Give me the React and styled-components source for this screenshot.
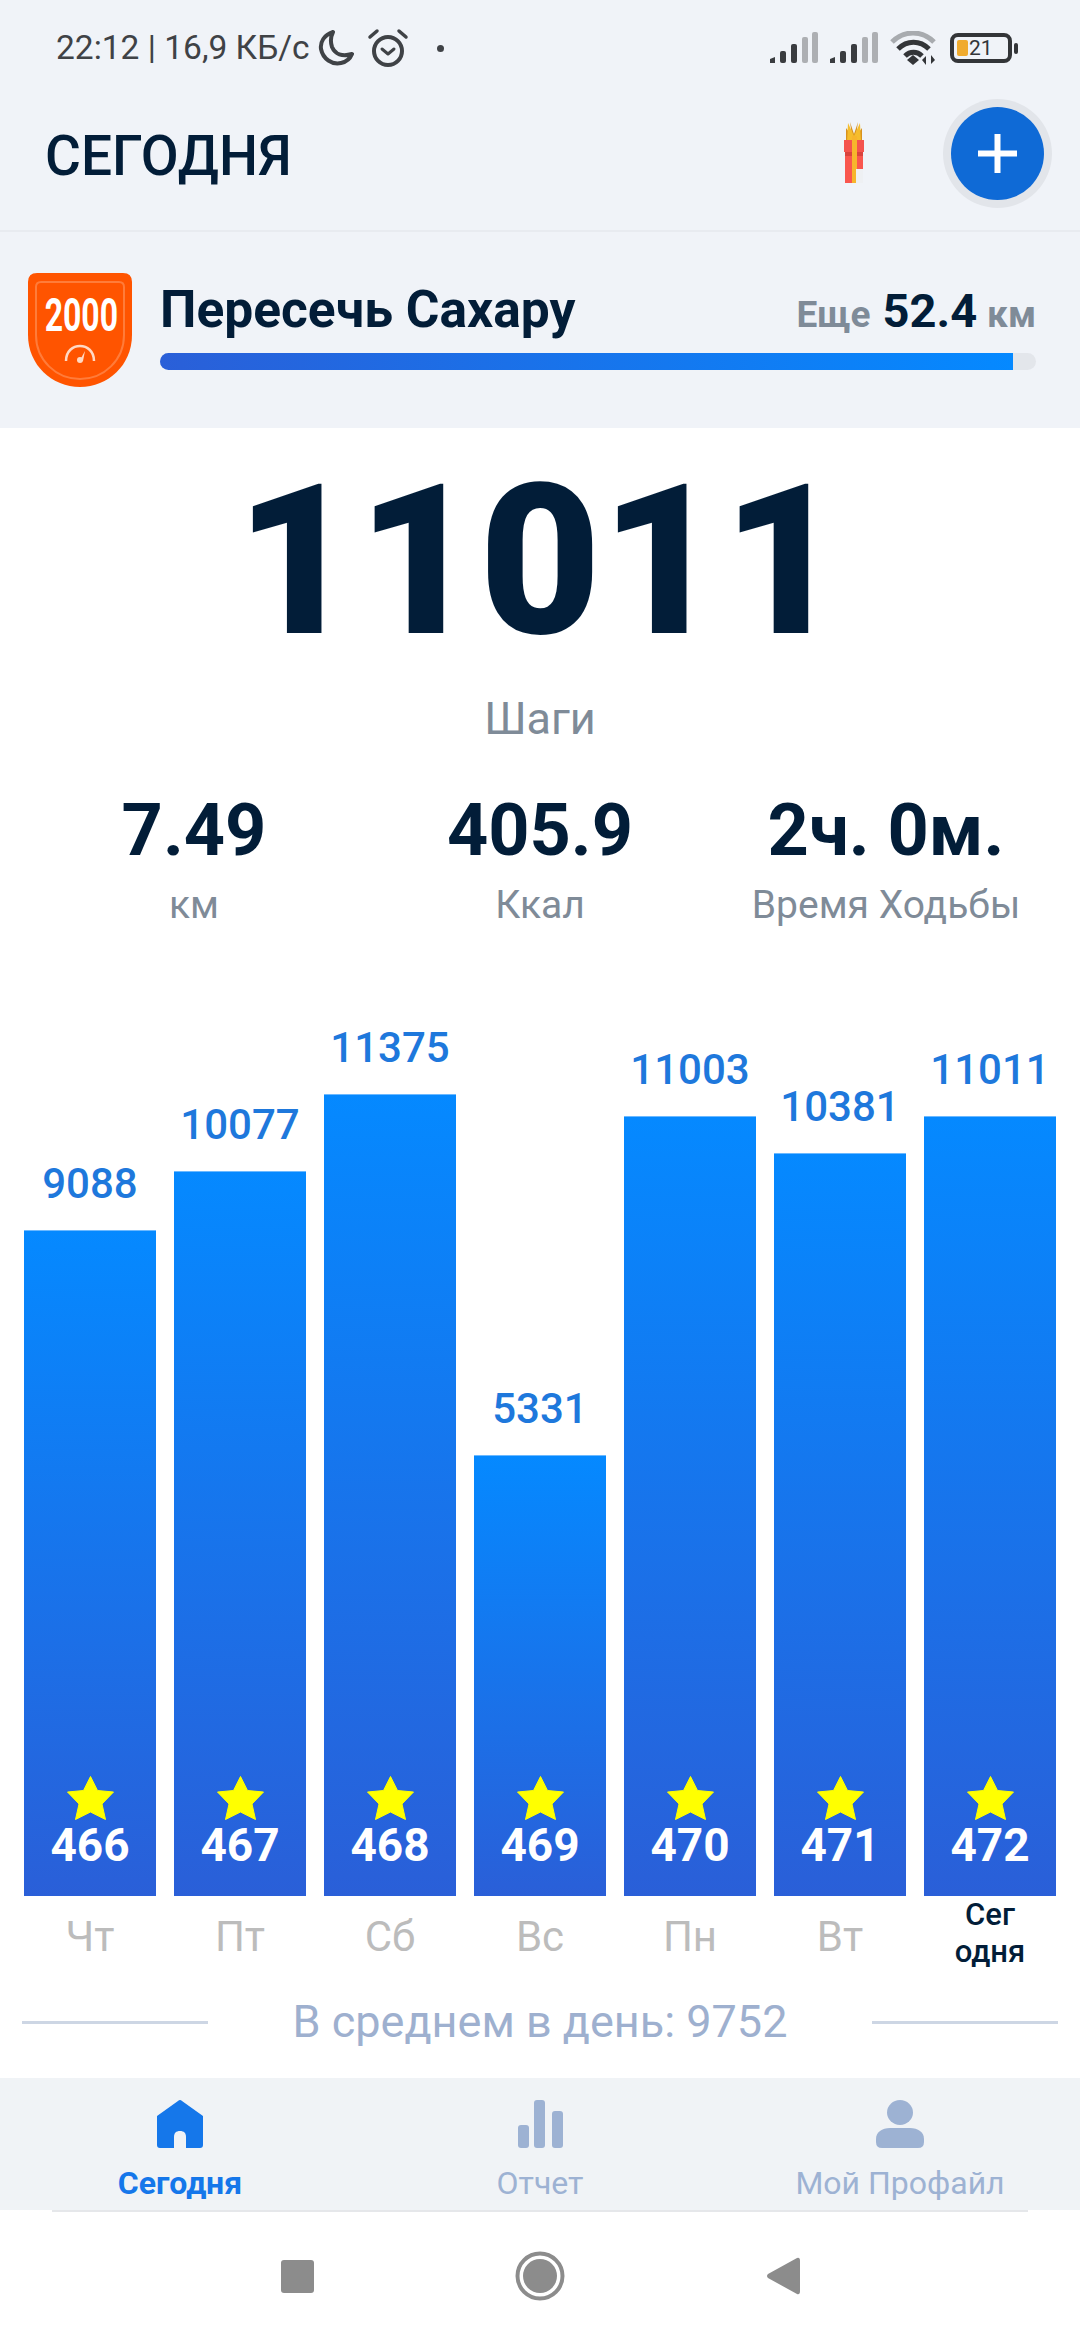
import React from "react";
import styled, { createGlobalStyle } from "styled-components";

const Global = createGlobalStyle`
  html, body { margin: 0; padding: 0; background: #fff; }
  * { box-sizing: border-box; }
  #root { width: 1080px; height: 2340px; overflow: hidden; }
`;

const Screen = styled.div`
  width: 1080px; height: 2340px; display: flex; flex-direction: column;
  font-family: Roboto, "Noto Sans", sans-serif; background: #fff; color: #021d38;
`;
const TopArea = styled.div`background: #f0f3f8;`;
const StatusBar = styled.div`
  height: 90px; display: flex; align-items: center; justify-content: space-between;
  padding: 6px 62px 0 56px; color: #3f4246;
`;
const StatusGroup = styled.div`display: flex; align-items: center; gap: ${p => p.$gap ?? 0}px;`;
const StatusText = styled.span`font-size: 33.5px; line-height: 40px; margin-right: 8px; white-space: nowrap;`;
const Dot = styled.span`width: 7px; height: 7px; border-radius: 50%; background: #3f4246; margin-left: 28px;`;

const Header = styled.header`
  height: 142px; display: flex; align-items: center; padding: 0 36px 14px 45px;
  border-bottom: 2px solid #e8ebf0;
`;
const Title = styled.h1`margin: 6px 0 0; flex: 1; font-size: 55px; line-height: 64px; font-weight: 500; color: #021d38;`;
const AddButton = styled.div`
  width: 93px; height: 93px; border-radius: 50%; background: #0f6ad6; margin-left: 87px;
  box-shadow: 0 0 0 8px #e2e5ea; display: flex; align-items: center; justify-content: center;
`;

const Challenge = styled.section`
  height: 196px; display: flex; gap: 28px; padding: 41px 44px 0 28px;
`;
const BadgeBox = styled.div`position: relative; flex: none; width: 104px; height: 114px;`;
const BadgeValue = styled.span`
  position: absolute; left: 0; right: 0; top: 14px; text-align: center;
  font-size: 47px; line-height: 56px; font-weight: 700; color: #fff; transform: scaleX(0.68);
`;
const ChallengeBody = styled.div`flex: 1; display: flex; flex-direction: column; padding-top: 9px;`;
const ChallengeRow = styled.div`display: flex; align-items: baseline; justify-content: space-between; height: 56px;`;
const ChallengeTitle = styled.div`font-size: 51.5px; line-height: 56px; font-weight: 700; color: #021d38;`;
const Remain = styled.div`font-size: 37px; line-height: 56px; font-weight: 700; color: #7f8b98; white-space: nowrap;`;
const RemainValue = styled.span`font-size: 47px; color: #021d38; margin: 0 10px 0 12px;`;
const Track = styled.div`height: 17px; margin-top: 15px; border-radius: 9px; background: #e3e6eb; overflow: hidden;`;
const Fill = styled.div`height: 100%; background: linear-gradient(90deg, #2a5fd8, #0589ff);`;

const Main = styled.main`flex: 1; display: flex; flex-direction: column; align-items: stretch;`;
const BigNumber = styled.div`
  margin-top: 33px; margin-bottom: -1px; text-align: center; font-size: 210px; line-height: 200px; font-weight: 900; color: #021d38;
`;
const StepsLabel = styled.div`margin-top: 34px; text-align: center; font-size: 45px; line-height: 50px; color: #7f8b98;`;
const Stats = styled.div`display: grid; grid-template-columns: repeat(3, 1fr); padding: 0 21px; margin-top: 47px;`;
const Stat = styled.div`display: flex; flex-direction: column; align-items: center;`;
const StatValue = styled.div`font-size: 72px; line-height: 80px; font-weight: 700; white-space: nowrap;`;
const StatLabel = styled.div`margin-top: 12px; font-size: 39px; line-height: 44px; color: #7f8b98; white-space: nowrap;`;

const Chart = styled.div`
  height: 969px; display: flex; align-items: flex-end; justify-content: space-between; padding: 0 24px;
`;
const Column = styled.div`width: 132px; display: flex; flex-direction: column; align-items: center;`;
const BarValue = styled.div`font-size: 42px; line-height: 40px; font-weight: 500; margin-bottom: 26px; color: #1e78dc;`;
const Bar = styled.div`
  width: 100%; display: flex; flex-direction: column; align-items: center; justify-content: flex-end;
  padding-bottom: 29px; background: linear-gradient(180deg, #0589ff 0%, #2a5fd8 100%);
  border-top: 1px solid #6cb9ff;
`;
const BarCount = styled.div`margin-top: 3px; font-size: 46px; line-height: 44px; font-weight: 700; color: #fff;`;

const Days = styled.div`height: 100px; display: flex; justify-content: space-between; padding: 0 24px;`;
const Day = styled.div`
  width: 132px; text-align: center; padding-top: ${p => (p.$today ? 0 : 21)}px; white-space: pre-line;
  font-size: ${p => (p.$today ? 31 : 42)}px; line-height: ${p => (p.$today ? 37 : 40)}px;
  font-weight: ${p => (p.$today ? 500 : 400)};
  color: ${p => (p.$today ? "#021d38" : "#bcbcbc")};
`;
const Average = styled.div`display: flex; align-items: center; justify-content: space-between; height: 52px; padding: 0 22px;`;
const AverageRule = styled.div`width: 186px; height: 3px; background: #cdd6e4;`;
const AverageText = styled.div`font-size: 45px; line-height: 52px; color: #9eb0cf; white-space: nowrap;`;

const TabBar = styled.nav`height: 132px; display: grid; grid-template-columns: repeat(3, 1fr); background: #f0f3f6;`;
const Tab = styled.div`
  display: flex; flex-direction: column; align-items: center; padding-top: 22px;
  color: ${p => (p.$active ? "#1577ea" : "#9db2d3")};
`;
const TabIcon = styled.div`height: 48px; display: flex;`;
const TabLabel = styled.div`
  margin-top: 17px; font-size: 32px; line-height: 36px; white-space: nowrap;
  font-weight: ${p => (p.$active ? 700 : 400)};
`;
const TabRule = styled.div`height: 2px; margin: 0 52px; background: #e5e7ea;`;
const NavBar = styled.div`height: 128px; flex: none; display: flex; align-items: center; justify-content: center;`;
const NavSlot = styled.div`width: 243px; display: flex; justify-content: center;`;

const Moon = () => (
  <svg width="36" height="38" viewBox="0 0 36 38" fill="none" stroke="#3f4246" strokeWidth="4" strokeLinejoin="round">
    <path d="M15 3 C6 6 2 13 3 20 C5 30 14 36 23 34 C28 33 32 30 34 25 C24 28 17 25 14 18 C12 12 13 7 15 3 Z" />
  </svg>
);
const Alarm = () => (
  <svg width="42" height="40" viewBox="0 0 42 40" fill="none" stroke="#3f4246" strokeLinecap="round" style={{ marginLeft: 13 }}>
    <circle cx="21" cy="23" r="14" strokeWidth="4" />
    <path d="M15 21 L21 26 L27 21" strokeWidth="3" strokeLinejoin="round" />
    <path d="M3 9 L10 3" strokeWidth="3.5" />
    <path d="M39 9 L32 3" strokeWidth="3.5" />
  </svg>
);
const Signal = () => (
  <svg width="48" height="32" viewBox="0 0 48 32">
    <path d="M0 27 L5 25 V31 H0 Z" fill="#3a3c40" />
    <rect x="10" y="19" width="6" height="12" rx="2" fill="#3a3c40" />
    <rect x="21" y="12" width="6" height="19" rx="2" fill="#3a3c40" />
    <rect x="32" y="5" width="6" height="26" rx="2" fill="#adafb3" />
    <rect x="42" y="0" width="6" height="31" rx="2" fill="#adafb3" />
  </svg>
);
const Wifi = () => (
  <svg width="48" height="34" viewBox="0 0 48 34" fill="none">
    <path d="M2 11 C14 -1 32 -1 44 11" stroke="#a8abaf" strokeWidth="5" />
    <path d="M8 18 C17 9 30 9 39 18" stroke="#333538" strokeWidth="5" />
    <path d="M15 25 C20 20 27 20 32 25" stroke="#333538" strokeWidth="5" />
    <path d="M23 24 L29 29 L23 34 L17 29 Z" fill="#333538" />
    <path d="M36 34 V25 L32 29 Z M41 24 V33 L45 29 Z" fill="#333538" />
  </svg>
);
const BatteryBox = styled.div`
  width: 62px; height: 30px; border: 4px solid #333538; border-radius: 8px;
  display: flex; align-items: center; padding-left: 3px;
`;
const BatteryFill = styled.span`width: 11px; height: 16px; border-radius: 2px; background: #f0ab2e;`;
const BatteryText = styled.span`font-size: 21px; line-height: 22px; margin-left: 1px; color: #333538;`;
const BatteryCap = styled.span`width: 4px; height: 11px; border-radius: 2px; background: #333538; margin-left: 2px;`;

const Gift = () => (
  <svg width="20" height="62" viewBox="0 0 20 62">
    <path d="M2 20 L2 6 L8 14 L6 0 L10 12 L14 0 L12 14 L18 6 L18 20 Z" fill="#d8921f" />
    <path d="M4 1 L10 14 L16 1 L17 20 H3 Z" fill="#f5bd2d" />
    <rect x="0" y="18" width="20" height="12" fill="#f4534e" />
    <rect x="1" y="30" width="18" height="31" fill="#f9564e" />
    <rect x="1" y="30" width="18" height="4" fill="#d9423d" />
    <rect x="8" y="14" width="5" height="47" fill="#f7b52c" />
    <rect x="12" y="47" width="7" height="14" fill="#eef0f3" />
  </svg>
);
const Plus = () => (
  <svg width="39" height="39" viewBox="0 0 39 39"><path d="M16.5 0 H22.5 V16.5 H39 V22.5 H22.5 V39 H16.5 V22.5 H0 V16.5 H16.5 Z" fill="#fff" /></svg>
);
const BadgeShape = () => (
  <svg width="104" height="114" viewBox="0 0 104 114">
    <path d="M9 0 H95 Q104 0 104 9 V62 C104 92 80 114 52 114 C24 114 0 92 0 62 V9 Q0 0 9 0 Z" fill="#ff5400" />
    <path d="M13 9 H91 Q96 9 96 14 V62 C96 87 76 106 52 106 C28 106 8 87 8 62 V14 Q8 9 13 9 Z" fill="none" stroke="#ff7c3a" strokeWidth="2" />
    <path d="M38 88 C38 68 66 68 66 88" fill="none" stroke="#ffd9c4" strokeWidth="2.5" />
    <path d="M52 87 L57 78 L55 88 Z" fill="#ffd9c4" />
    <circle cx="52" cy="87" r="3" fill="#ffd9c4" />
  </svg>
);
const Star = () => (
  <svg width="47" height="44" viewBox="0 0 47 44">
    <path d="M23.5 0.5 L30.5 14.5 L46.5 16 L35 28 L38.5 43.5 L23.5 36 L8.5 43.5 L12 28 L0.5 16 L16.5 14.5 Z" fill="#ffff00" stroke="#ffff00" strokeWidth="1" strokeLinejoin="round" />
  </svg>
);
const HomeIcon = () => (
  <svg width="46" height="48" viewBox="0 0 46 48" fill="currentColor">
    <path d="M21 1 Q23 -1 25 1 L46 16 V45 Q46 48 43 48 H29 V37 C29 33 27 31 23 31 C19 31 17 33 17 37 V48 H3 Q0 48 0 45 V16 Z" />
  </svg>
);
const ReportIcon = () => (
  <svg width="45" height="48" viewBox="0 0 45 48" fill="currentColor">
    <rect x="0" y="25" width="11" height="23" rx="3" />
    <rect x="16" y="0" width="11" height="48" rx="3" />
    <rect x="34" y="11" width="11" height="37" rx="3" />
  </svg>
);
const ProfileIcon = () => (
  <svg width="48" height="48" viewBox="0 0 48 48" fill="currentColor">
    <ellipse cx="24" cy="12.5" rx="13" ry="12.5" />
    <path d="M14 28 H34 C42 28 48 32 48 39 V42 Q48 48 42 48 H6 Q0 48 0 42 V39 C0 32 6 28 14 28 Z" />
  </svg>
);
const NavSquare = () => <svg width="33" height="33" viewBox="0 0 33 33"><rect width="33" height="33" rx="3" fill="#8c8c8c" /></svg>;
const NavCircle = () => (
  <svg width="50" height="50" viewBox="0 0 50 50">
    <circle cx="25" cy="25" r="22.5" fill="none" stroke="#8c8c8c" strokeWidth="4" />
    <circle cx="25" cy="25" r="17" fill="#8c8c8c" />
  </svg>
);
const NavBack = () => (
  <svg width="33" height="38" viewBox="0 0 33 38"><path d="M30 1 Q33 0 33 4 V34 Q33 38 30 37 L1 21 Q-1 19 1 17 Z" fill="#8c8c8c" /></svg>
);

const bars = [
  { value: 9088, height: 666, count: 466, day: "Чт" },
  { value: 10077, height: 725, count: 467, day: "Пт" },
  { value: 11375, height: 802, count: 468, day: "Сб" },
  { value: 5331, height: 441, count: 469, day: "Вс" },
  { value: 11003, height: 780, count: 470, day: "Пн" },
  { value: 10381, height: 743, count: 471, day: "Вт" },
  { value: 11011, height: 780, count: 472, day: "Сег\nодня", today: true },
];

export default function App() {
  return (
    <Screen>
      <Global />
      <TopArea>
        <StatusBar>
          <StatusGroup>
            <StatusText>22:12 | 16,9 КБ/с</StatusText>
            <Moon />
            <Alarm />
            <Dot />
          </StatusGroup>
          <StatusGroup $gap={12}>
            <Signal />
            <Signal />
            <Wifi />
            <StatusGroup>
              <BatteryBox>
                <BatteryFill />
                <BatteryText>21</BatteryText>
              </BatteryBox>
              <BatteryCap />
            </StatusGroup>
          </StatusGroup>
        </StatusBar>
        <Header>
          <Title>СЕГОДНЯ</Title>
          <Gift />
          <AddButton><Plus /></AddButton>
        </Header>
        <Challenge>
          <BadgeBox>
            <BadgeShape />
            <BadgeValue>2000</BadgeValue>
          </BadgeBox>
          <ChallengeBody>
            <ChallengeRow>
              <ChallengeTitle>Пересечь Сахару</ChallengeTitle>
              <Remain>Еще<RemainValue>52.4</RemainValue>км</Remain>
            </ChallengeRow>
            <Track><Fill style={{ width: `${(853 / 876) * 100}%` }} /></Track>
          </ChallengeBody>
        </Challenge>
      </TopArea>
      <Main>
        <BigNumber>11011</BigNumber>
        <StepsLabel>Шаги</StepsLabel>
        <Stats>
          <Stat><StatValue>7.49</StatValue><StatLabel>км</StatLabel></Stat>
          <Stat><StatValue>405.9</StatValue><StatLabel>Ккал</StatLabel></Stat>
          <Stat><StatValue>2ч. 0м.</StatValue><StatLabel>Время Ходьбы</StatLabel></Stat>
        </Stats>
        <Chart>
          {bars.map(b => (
            <Column key={b.count}>
              <BarValue>{b.value}</BarValue>
              <Bar style={{ height: b.height }}>
                <Star />
                <BarCount>{b.count}</BarCount>
              </Bar>
            </Column>
          ))}
        </Chart>
        <Days>
          {bars.map(b => (
            <Day key={b.count} $today={b.today}>{b.day}</Day>
          ))}
        </Days>
        <Average>
          <AverageRule />
          <AverageText>В среднем в день: 9752</AverageText>
          <AverageRule />
        </Average>
      </Main>
      <TabBar>
        <Tab $active>
          <TabIcon><HomeIcon /></TabIcon>
          <TabLabel $active>Сегодня</TabLabel>
        </Tab>
        <Tab>
          <TabIcon><ReportIcon /></TabIcon>
          <TabLabel>Отчет</TabLabel>
        </Tab>
        <Tab>
          <TabIcon><ProfileIcon /></TabIcon>
          <TabLabel>Мой Профайл</TabLabel>
        </Tab>
      </TabBar>
      <TabRule />
      <NavBar>
        <NavSlot><NavSquare /></NavSlot>
        <NavSlot><NavCircle /></NavSlot>
        <NavSlot><NavBack /></NavSlot>
      </NavBar>
    </Screen>
  );
}
